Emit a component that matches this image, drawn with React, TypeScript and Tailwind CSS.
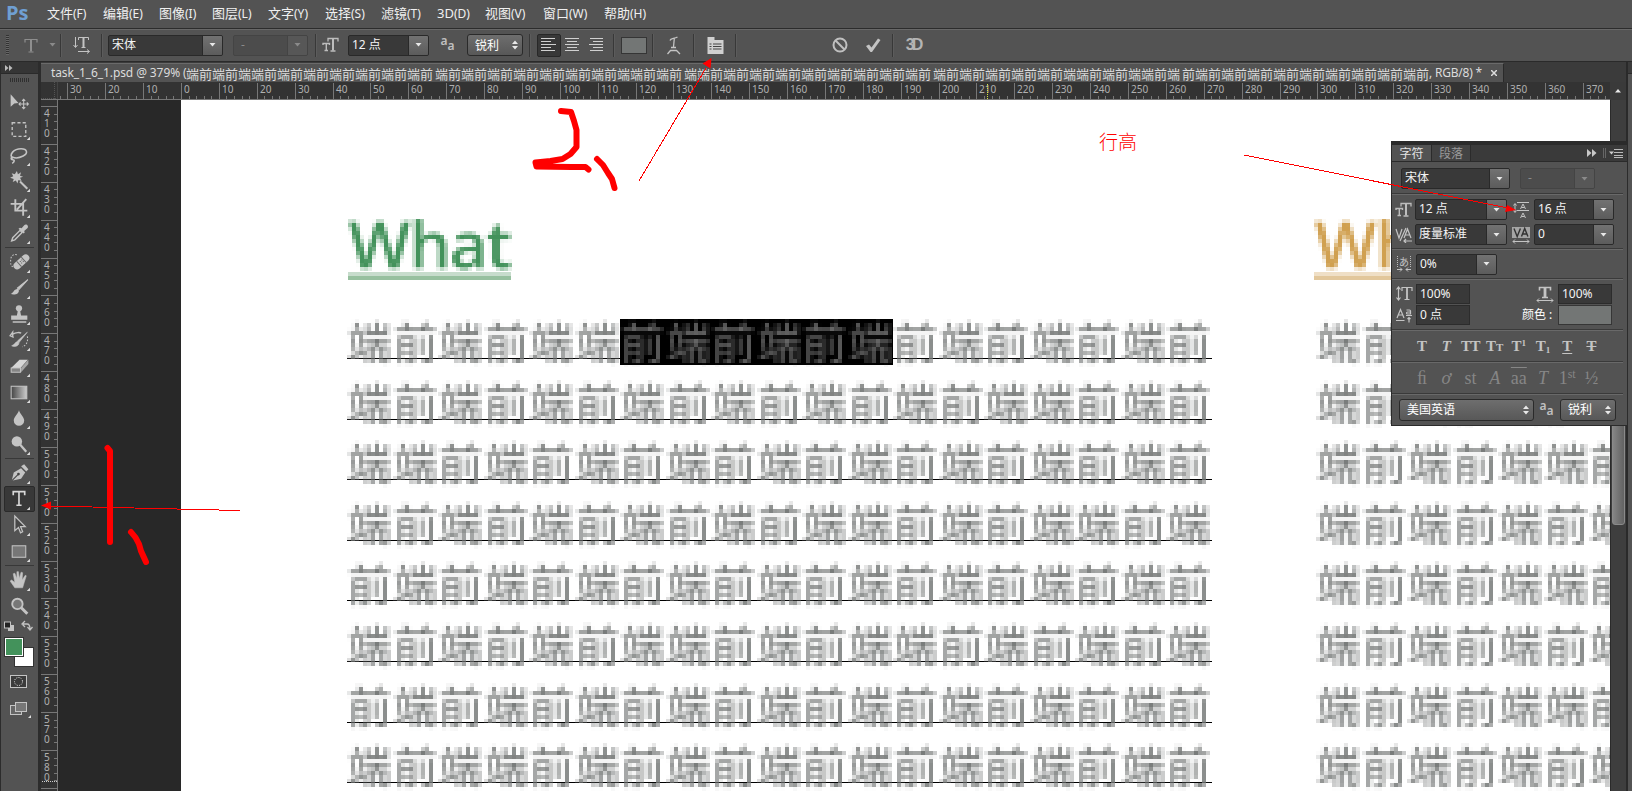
import type { ReactNode } from "react";
import { clsx } from "clsx";

const UI = "font-['Noto_Sans','Noto_Sans_CJK_SC',sans-serif]";
const CJK = "font-['Noto_Sans_CJK_SC',sans-serif]";
const SERIF = "font-['Liberation_Serif',serif]";

const LINES = [
  "端前端前端端前端前端前端前端前端前端前",
  "端前端前端前端前端前端前端前端端前端前",
  "端端前端前端前端前端前端前端前端前端前",
  "端前端前端前端前端前端端前端前端端前端",
  "前端前端前端前端前端前端前端前端前端前",
  "端前端前端前端端前端前端端前端前端前端",
  "前端前端前端前端前端前端前端前端前端前",
  "端前端端前端前端前端前端前端前端前端前",
];
const RIGHT_LINES = [
  "端前端前端前端",
  "端前端前端前端",
  "端前端前端端前",
  "端前端前端前端",
  "端前端前端端前",
  "端前端前端前端",
  "端前端前端端前",
  "端前端前端前端",
];
const ROW_HEIGHTS = [
  "h-[61px]", "h-[60px]", "h-[61px]", "h-[60px]",
  "h-[61px]", "h-[61px]", "h-[60px]", "h-[61px]",
];

const MENUS: [string, string, string][] = [
  ["文件", "(F)", "w-[56px]"],
  ["编辑", "(E)", "w-[56px]"],
  ["图像", "(I)", "w-[53px]"],
  ["图层", "(L)", "w-[56px]"],
  ["文字", "(Y)", "w-[57px]"],
  ["选择", "(S)", "w-[56px]"],
  ["滤镜", "(T)", "w-[56px]"],
  ["3D", "(D)", "w-[48px]"],
  ["视图", "(V)", "w-[58px]"],
  ["窗口", "(W)", "w-[61px]"],
  ["帮助", "(H)", "w-[60px]"],
];

/* Mosaic effect used for the zoomed-in artboard: average, sample one point per cell, grow it to 4x4. */
function MosaicFilter() {
  return (
    <svg className="absolute h-0 w-0" aria-hidden="true">
      <filter id="mosaic" filterUnits="userSpaceOnUse" primitiveUnits="userSpaceOnUse" x="-4" y="-4" width="220" height="88" colorInterpolationFilters="sRGB">
        <feGaussianBlur in="SourceGraphic" stdDeviation="1.2" result="soft" />
        <feFlood x="1" y="1" width="1" height="1" floodColor="#000" result="dot" />
        <feOffset in="dot" dx="0" dy="0" x="0" y="0" width="4" height="4" result="cell" />
        <feTile in="cell" x="-4" y="-4" width="220" height="88" result="grid" />
        <feComposite in="soft" in2="grid" operator="in" result="p" />
        <feOffset in="p" dx="1" dy="0" result="p1" />
        <feMerge result="h2"><feMergeNode in="p" /><feMergeNode in="p1" /></feMerge>
        <feOffset in="h2" dx="-2" dy="0" result="h2b" />
        <feMerge result="h4"><feMergeNode in="h2" /><feMergeNode in="h2b" /></feMerge>
        <feOffset in="h4" dx="0" dy="1" result="v1" />
        <feMerge result="v2"><feMergeNode in="h4" /><feMergeNode in="v1" /></feMerge>
        <feOffset in="v2" dx="0" dy="-2" result="v2b" />
        <feMerge><feMergeNode in="v2" /><feMergeNode in="v2b" /></feMerge>
      </filter>
    </svg>
  );
}

function Glyphs({ text, selectFrom = -1, selectTo = -1 }: { text: string; selectFrom?: number; selectTo?: number }) {
  return (
    <div className={clsx("col-start-1 row-start-1 flex h-[46px] text-[44px] leading-[42px]", CJK)}>
      {[...text].map((ch, i) => {
        const selected = i >= selectFrom && i < selectTo;
        return (
          <span key={i} className={clsx("h-[46px] shrink-0 pt-px pl-px", i % 2 ? "w-[45px]" : "w-[46px]", selected ? "bg-black text-[#6a6a6a]" : "text-[#737675]")}>
            <span className="block h-[45px] w-[44px] [filter:url(#mosaic)]">{ch}</span>
          </span>
        );
      })}
    </div>
  );
}

function Caret({ dim = false }: { dim?: boolean }) {
  return (
    <svg width="7" height="4" viewBox="0 0 7 4"><path d="M0.5 0h6L3.5 3.6z" fill={dim ? "#8a8a8a" : "#e8e8e8"} /></svg>
  );
}

function Combo({ w, value, dim = false }: { w: string; value: string; dim?: boolean }) {
  return (
    <div className={clsx("flex h-[21px] shrink-0 overflow-hidden rounded-[2px] border text-[12px] leading-[18px]", w, UI, dim ? "border-[#444] bg-[#4c4c4c] text-[#8a8a8a]" : "border-[#292929] bg-[#393939] text-[#f4f4f4]")}>
      <span className={clsx("grow whitespace-nowrap", dim ? "pl-[7px]" : "pl-[3px]")}>{value}</span>
      <span className={clsx("flex w-[20px] items-center justify-center border-l", dim ? "border-[#444] bg-[#575757]" : "border-[#292929] bg-linear-to-b from-[#727272] to-[#5c5c5c]")}>
        <Caret dim={dim} />
      </span>
    </div>
  );
}

function Field({ w, value }: { w: string; value: string }) {
  return <div className={clsx("h-[20px] shrink-0 border border-[#2c2c2c] bg-[#393939] pl-[3px] text-[12px] leading-[18px] text-[#f4f4f4]", w, UI)}>{value}</div>;
}

function Popup({ w, value }: { w: string; value: string }) {
  return (
    <div className={clsx("flex h-[22px] shrink-0 items-center justify-between rounded-[3px] border border-[#2a2a2a] bg-linear-to-b from-[#6e6e6e] to-[#585858] pr-[4px] pl-[7px] text-[12px] text-white", w, CJK)}>
      <span className="-mt-px leading-none">{value}</span>
      <svg width="6" height="10" viewBox="0 0 6 10"><path d="M0 4L3 0.5 6 4zM0 6h6L3 9.5z" fill="#e8e8e8" /></svg>
    </div>
  );
}

function Bar() {
  return <i className="h-[23px] w-[2px] shrink-0 border-l border-[#383838] bg-[#5c5c5c]" />;
}

function Slot({ w, children }: { w: string; children?: ReactNode }) {
  return <div className={clsx("flex h-full shrink-0 items-center justify-center", w)}>{children}</div>;
}

function SizeIcon() {
  return (
    <svg width="17" height="16" viewBox="0 0 17 16" fill="none" stroke="#bdbdbd">
      <path d="M6 4.500V1.500h10V4.500M8.500 14h5" strokeWidth="1.300" />
      <path d="M11 1.500v12" strokeWidth="2" />
      <path d="M1 8V6.500h6.500V8M4.300 6.500V13M2.500 13.500h3.500" strokeWidth="1.400" />
    </svg>
  );
}

function AaIcon() {
  return (
    <span className="flex w-[15px] font-['Noto_Sans',sans-serif] text-[12px] font-semibold leading-none text-[#c0c0c0]">
      <span className="-mt-[3px]">a</span><span className="mt-[2px]">a</span>
    </span>
  );
}

function AlignIcon({ d }: { d: string }) {
  return <svg width="16" height="15" viewBox="0 0 16 15"><path d={d} stroke="#d0d0d0" fill="none" /></svg>;
}

function OptionsBar() {
  return (
    <div className="flex h-[33px] shrink-0 items-center border-t border-b border-t-[#686868] border-b-[#2a2a2a] bg-[#535353] pb-px">
      <Slot w="w-[14px]"><i className="h-[20px] w-[3px] bg-[repeating-linear-gradient(#333_0_1px,#666_1px_2px)]" /></Slot>
      <Slot w="w-[34px]">
        <svg width="14" height="15" viewBox="0 0 14 15" fill="none" stroke="#8e8e8e"><path d="M1 4.500V1.500h12V4.500M4.500 14h5" strokeWidth="1.200" /><path d="M7 1.500v12" strokeWidth="2" /></svg>
      </Slot>
      <Slot w="w-[8px]"><Caret dim /></Slot>
      <Slot w="w-[4px]" />
      <Bar />
      <Slot w="w-[39px]">
        <svg width="18" height="18" viewBox="0 0 18 18" fill="none" stroke="#c4c4c4">
          <path d="M2.500 1v10M.5 9l2 2.500 2-2.500M5 15.500h11M14 13.500l2.500 2-2.500 2M5.500 4V1.500h10V4M8.500 11.500h4" /><path d="M10.500 1.500v10" strokeWidth="2" />
        </svg>
      </Slot>
      <Bar />
      <Slot w="w-[5px]" />
      <Combo w="w-[115px]" value="宋体" />
      <Slot w="w-[10px]" />
      <Combo w="w-[75px]" value="-" dim />
      <Slot w="w-[7px]" />
      <Bar />
      <Slot w="w-[26px]"><SizeIcon /></Slot>
      <Slot w="w-[5px]" />
      <Combo w="w-[81px]" value="12 点" />
      <Slot w="w-[38px]"><AaIcon /></Slot>
      <Popup w="w-[56px]" value="锐利" />
      <Slot w="w-[6px]" />
      <Bar />
      <Slot w="w-[6px]" />
      <div className="flex h-[23px] w-[24px] items-center justify-center rounded-[2px] border border-[#282828] bg-[#383838]">
        <AlignIcon d="M0 .5h14M0 3.500h10M0 6.500h15M0 9.500h10M0 12.500h14" />
      </div>
      <Slot w="w-[22px]"><AlignIcon d="M1 .5h14M3 3.500h10M1 6.500h14M3 9.500h10M1 12.500h14" /></Slot>
      <Slot w="w-[25px]"><AlignIcon d="M2 .5h13M5 3.500h10M1 6.500h14M5 9.500h10M2 12.500h13" /></Slot>
      <Slot w="w-[5px]" />
      <Bar />
      <Slot w="w-[37px]"><i className="h-[17px] w-[26px] border border-[#353535] bg-[#737675]" /></Slot>
      <Bar />
      <Slot w="w-[39px]">
        <svg width="16" height="19" viewBox="0 0 16 19" fill="none" stroke="#c4c4c4" strokeWidth="1.300">
          <path d="M4 4.500c.5-2.500 4-1.500 7.500-3.500M8.300 2.500L7.500 11M5 11.500h5M1.500 18l3-3.500h6l3.500 3.500" />
        </svg>
      </Slot>
      <Bar />
      <Slot w="w-[40px]">
        <svg width="17" height="17" viewBox="0 0 17 17">
          <path d="M.5 0h7v3H16.500v14H.5z" fill="#d0d0d0" /><path d="M2.500 7h2M2.500 9.500h2M2.500 12h2M6 7h8.500M6 9.500h8.500M6 12h8.500" stroke="#444" />
        </svg>
      </Slot>
      <Bar />
      <Slot w="w-[87px]" />
      <Slot w="w-[32px]">
        <svg width="16" height="16" viewBox="0 0 16 16" fill="none" stroke="#c0c0c0" strokeWidth="2"><circle cx="8" cy="8" r="6.500" /><path d="M3.500 3.500l9 9" /></svg>
      </Slot>
      <Slot w="w-[33px]">
        <svg width="16" height="15" viewBox="0 0 16 15"><path d="M1 8l3-1.500 2.500 3L13 .5l2.500 1.500L7 14H5.500z" fill="#c4c4c4" /></svg>
      </Slot>
      <Slot w="w-[3px]" />
      <Bar />
      <Slot w="w-[38px]"><span className="font-['Liberation_Sans',sans-serif] text-[16px] font-bold leading-none tracking-[-3px] text-[#b4b4b4]">3D</span></Slot>
    </div>
  );
}

const G = "#c4c4c4";
const TOOL_GROUPS: { id: string; art: ReactNode; plain?: boolean }[][] = [
  [
    { id: "move", plain: true, art: <><path d="M3 3v12l3.500-3 4-.5z" fill={G} /><path d="M15.500 8v9M11 12.500h9M14 9.500l1.500-1.500L17 9.500M14 15.500l1.500 1.500 1.500-1.500M12.500 11L11 12.500l1.500 1.500M18.500 11l1.500 1.500-1.500 1.500" stroke={G} fill="none" /></> },
    { id: "marquee", art: <rect x="4.500" y="5.500" width="13" height="13" fill="none" stroke={G} strokeWidth="1.300" strokeDasharray="3 2" /> },
    { id: "lasso", art: <path d="M5 15C1 11 6 5.500 13 5.500c6 0 7 4.500 2 7-4 2-8 2-10 1-2 0-2 2.500 0 2.500s2 2-.5 3.500" fill="none" stroke={G} strokeWidth="1.500" /> },
    { id: "wand", art: <><path d="M9 2l1 3 3-2-1 3.500 3 1-3 1 1.500 3-3-1L9.500 14 8 11l-3 1.500 1-3-3.500-1 3-1.500L4 4l3 1z" fill={G} /><path d="M12 12l7 7" stroke={G} strokeWidth="2" /></> },
    { id: "crop", art: <path d="M7.500 4v11H19M3 8.500h12V20M9 14L18 4" fill="none" stroke={G} strokeWidth="1.800" /> },
    { id: "dropper", art: <><path d="M4 19l1-3 7-7 2 2-7 7z" fill="none" stroke={G} strokeWidth="1.300" /><path d="M10.500 7.500l1.500-1 1.500.5L16 4c2-2 5 1 3 3l-3 2.500.5 1.500-1 1z" fill={G} /></> },
  ],
  [
    { id: "heal", art: <><g transform="rotate(-42 13 11)"><rect x="4" y="8" width="18" height="7" rx="3.500" fill={G} /><path d="M10 8v7M16 8v7" stroke="#666" /><path d="M12 10.500h3M12 12.500h3" stroke="#666" strokeDasharray="1 1" /></g><path d="M9 4.500c-5-1-6 3-6 6s0 5 3 6" fill="none" stroke={G} strokeDasharray="1.500 1.500" /></> },
    { id: "brush", art: <><path d="M19.500 3.500L11 13l-1.500-1.500z" fill={G} stroke={G} /><path d="M3 17c3-.5 3-5 7-4.500 2 1.500.5 4.500-2 5-2 .5-4 .3-5-.5z" fill={G} /></> },
    { id: "stamp", art: <><circle cx="11" cy="6" r="3" fill={G} /><path d="M10 8h2l1 5h6v4H3.500v-4H9zM5 18.500h13V20H5z" fill={G} /></> },
    { id: "history", art: <><path d="M19 4l-8 10-1.500-1.500zM4 17c3-.5 3-4 6-4 2 1.500.5 4-2 4.500-2 .3-3 .2-4-.5z" fill={G} stroke={G} strokeWidth=".6" /><path d="M5 8V4l-2.500 3.500L6 9M5 6c3-2 7-2 8-1" fill="none" stroke={G} strokeWidth="1.300" /><path d="M19 8c1 5-1 9-5 10" fill="none" stroke={G} strokeDasharray="1.500 1.500" /></> },
    { id: "eraser", art: <><path d="M3.500 13.500l8-8h8l-7 8z" fill="#d6d6d6" /><path d="M3.500 13.500h9v4h-9z" fill="#858585" stroke={G} /><path d="M13 13.500l7-8v4l-7 8z" fill="#a5a5a5" /></> },
    { id: "gradient", art: <><defs><linearGradient id="gr"><stop stopColor="#444" /><stop offset="1" stopColor="#ccc" /></linearGradient></defs><rect x="3.500" y="6" width="15" height="12" fill="url(#gr)" stroke={G} /></> },
    { id: "blur", art: <path d="M11 4c1 4 5 6 5 10a5 5 0 0 1-10 0c0-4 4-6 5-10z" fill={G} /> },
    { id: "dodge", art: <><circle cx="9" cy="9" r="5" fill={G} /><path d="M12 12l6 7" stroke={G} strokeWidth="2.200" /></> },
  ],
  [
    { id: "pen", art: <><path d="M4 19l2-8 7-4 4 4-4 6z" fill={G} /><path d="M13 5l3-2 4 5-2 2z" fill={G} /><path d="M4 19l6-6" stroke="#444" /><circle cx="10.500" cy="12.500" r="1.300" fill="#444" /></> },
    { id: "type", art: <path d="M5.500 8V4.500h11V8M11 4.500v13M8.500 17.500h5" stroke="#d8d8d8" strokeWidth="1.600" fill="none" /> },
    { id: "path", art: <path d="M7 3v14l3.500-3 2 5 2-1-2-5H17z" fill="#484848" stroke={G} strokeWidth="1.200" /> },
    { id: "shape", art: <rect x="4.500" y="6.500" width="13" height="11" fill="#777" stroke={G} /> },
  ],
  [
    { id: "hand", art: <path d="M7 19l-4.500-6.500 1.500-1L7 14 5.500 5.500l1.500-.5L9 10V3.500h1.500l.8 6.500L13 4l1.500.5-.5 7 3-4.500 1 .5-2 6.500L14.500 19z" fill={G} stroke={G} strokeWidth=".5" /> },
    { id: "zoom", plain: true, art: <><circle cx="9.500" cy="9.500" r="5" fill="#777" stroke={G} strokeWidth="1.800" /><path d="M13 13l6 6" stroke={G} strokeWidth="2.800" /></> },
  ],
];

function Tool({ art, active, plain }: { art: ReactNode; active?: boolean; plain?: boolean }) {
  return (
    <div className={clsx("flex h-[26px] w-[31px] shrink-0 items-center justify-center rounded-[2px]", active && "border border-[#2a2a2a] bg-[#383838]")}>
      <svg width="27" height="24" viewBox="-1 0 25 23" className="shrink-0">
        {art}
        {!plain && <path d="M21.500 19v3h-3z" fill="#e0e0e0" />}
      </svg>
    </div>
  );
}

function Toolbar() {
  return (
    <div className="flex w-[41px] shrink-0 flex-col border-r-[3px] border-l border-[#2c2c2c] bg-[#535353]">
      <div className="flex h-[12px] shrink-0 items-center border-b border-[#2a2a2a] bg-[#353535] pl-[4px]">
        <svg width="8" height="6" viewBox="0 0 8 6"><path d="M0 0l3.500 3L0 6zM4 0l3.500 3L4 6z" fill="#bbb" /></svg>
      </div>
      <div className="flex h-[16px] shrink-0 items-start pt-[4px] pl-[9px]">
        <i className="h-[4px] w-[19px] bg-[repeating-linear-gradient(90deg,#2f2f2f_0_1px,#555_1px_2px)]" />
      </div>
      <div className="flex flex-col pl-[3px]">
        {TOOL_GROUPS.map((group, gi) => (
          <div key={gi} className="flex flex-col">
            {gi > 0 && <i className="mt-px mb-px ml-px h-px w-[29px] bg-[#383838]" />}
            {group.map((t) => <Tool key={t.id} art={t.art} plain={t.plain} active={t.id === "type"} />)}
          </div>
        ))}
        <svg width="32" height="106" viewBox="4 619 32 106" className="shrink-0">
          <rect x="8.500" y="625.500" width="5" height="5" fill={G} stroke={G} />
          <rect x="4.500" y="622" width="6" height="6" fill="#222" stroke={G} />
          <path d="M23 624h4c2 0 3 1 3 5M25 621l-3 3 3 3M27.500 627l2.500 3 2.500-3" fill="none" stroke={G} strokeWidth="1.300" />
          <rect x="14.500" y="647.500" width="19" height="19" fill="#fff" stroke="#333" />
          <rect x="4.500" y="637.500" width="19" height="19" fill="#fff" stroke="#333" />
          <rect x="6" y="639" width="16" height="16" fill="#43925b" />
          <rect x="10.500" y="675.500" width="16" height="12" fill="#3b3b3b" stroke={G} />
          <circle cx="18.500" cy="681.500" r="4" fill="none" stroke="#eee" strokeDasharray="1 1.300" />
          <rect x="10.500" y="705.500" width="11" height="9" fill="#666" stroke={G} />
          <rect x="15.500" y="702.500" width="11" height="9" fill="#777" stroke={G} />
          <path d="M31 715v3h-3z" fill="#e0e0e0" />
        </svg>
      </div>
    </div>
  );
}

const STEP = 37.88;

function TopRuler() {
  const majors = Array.from({ length: 41 }, (_, i) => i - 3);
  return (
    <svg width="1569" height="18" viewBox="41 82 1569 18" className="shrink-0 bg-[#333] font-['Noto_Sans',sans-serif] text-[10px]">
      <path d="M41 98.500h17M54.500 82v18" stroke="#555" strokeDasharray="1 1" />
      <path d="M57.500 82v17" stroke="#444" />
      <path d="M60.500 96v3" stroke="#777" />
      {majors.map((n) => {
        const x = Math.round(181 + n * STEP) + 0.5;
        return (
          <g key={n}>
            <path d={`M${x} 83V99` + [1, 2, 3, 4].map((k) => `M${Math.round(181 + (n + k / 5) * STEP) + 0.5} 96V99`).join("")} stroke="#777" />
            {n < 38 && <text x={x + 2.500} y="93" fill="#b0b0b0">{Math.abs(n) * 10}</text>}
          </g>
        );
      })}
      <path d="M41 99.500H1610" stroke="#777" />
      <path d="M987.500 84V99" stroke="#d8e840" strokeDasharray="1 1" />
    </svg>
  );
}

function SideRuler() {
  const majors = Array.from({ length: 19 }, (_, i) => i);
  return (
    <svg width="17" height="691" viewBox="41 100 17 691" className="shrink-0 bg-[#333] font-['Noto_Sans',sans-serif] text-[10px]">
      {majors.map((n) => {
        const y = Math.round(106 + n * STEP) + 0.5;
        return (
          <g key={n}>
            <path d={`M41 ${y}H57` + [1, 2, 3, 4].map((k) => `M54 ${Math.round(106 + (n + k / 5) * STEP) + 0.5}H57`).join("")} stroke="#777" />
            {n < 18 && [...String(410 + n * 10)].map((c, i) => (
              <text key={i} x="44" y={y + 10.500 + i * 10} fill="#b0b0b0">{c}</text>
            ))}
          </g>
        );
      })}
      <path d="M57.500 100V791" stroke="#777" />
      <path d="M42 781.500H57" stroke="#ccc" strokeDasharray="1 1" />
    </svg>
  );
}

function Column({ title, color, bars, rows, underlined, widths }: { title: string; color: string; bars: [string, string]; rows: string[]; underlined?: boolean; widths: [string, string] }) {
  return (
    <div className={clsx("shrink-0 pt-[106px]", widths[0])}>
      <div className={clsx("h-[66px] pt-[2px] pl-[2px] font-['Open_Sans',sans-serif] text-[66px] font-semibold leading-[71px] tracking-[-1.700px]", color)}>
        <span className="block h-[72px] w-[200px] [filter:url(#mosaic)]">{title}</span>
      </div>
      <div className={clsx("ml-px h-[4px]", widths[1], bars[0])} />
      <div className={clsx("ml-px h-[4px]", widths[1], bars[1])} />
      <div className="mt-[39px]">
        {rows.map((r, i) => (
          <div key={i} className={clsx("grid content-start", ROW_HEIGHTS[i], !underlined && "pl-[3px]")}>
            {underlined && <i className="col-start-1 row-start-1 mt-[39px] h-px w-[865px] bg-black" />}
            <Glyphs text={r} selectFrom={underlined && i === 0 ? 6 : -1} selectTo={underlined && i === 0 ? 12 : -1} />
          </div>
        ))}
      </div>
    </div>
  );
}

function Artboard() {
  return (
    <div className="flex w-[1552px] shrink-0 overflow-hidden bg-[#282828] pl-[123px]">
      <div className="flex w-[1429px] overflow-hidden bg-white pl-[166px]">
        <Column title="What" color="text-[#43925b]" bars={["bg-[#c7dccc]", "bg-[#97c09f]"]} rows={LINES} underlined widths={["w-[966px]", "w-[163px]"]} />
        <Column title="Why" color="text-[#d0a050]" bars={["bg-[#efdfc6]", "bg-[#e2c79b]"]} rows={RIGHT_LINES} widths={["w-[330px]", "w-[163px]"]} />
      </div>
    </div>
  );
}

function Rule() {
  return <div className="mr-[4px] h-[2px] shrink-0 border-t border-[#3a3a3a] bg-[#696969]" />;
}

function Style({ children, className }: { children: ReactNode; className?: string }) {
  return <span className={clsx("flex w-[24.200px] items-baseline justify-center whitespace-nowrap leading-none", className)}>{children}</span>;
}

function CharacterPanel() {
  return (
    <div className={clsx("absolute top-[141px] left-[1391px] flex h-[285px] w-[237px] flex-col border border-t-[4px] border-[#2b2b2b] bg-[#535353]", UI)}>
      <div className="flex h-[17px] shrink-0 border-b border-[#2b2b2b] bg-[#3a3a3a] text-[12px] leading-[17px]">
        <span className="w-[39px] bg-[#535353] text-center text-[#e4e4e4]">字符</span>
        <span className="w-[40px] border-x border-[#2b2b2b] bg-[#434343] text-center text-[#999]">段落</span>
        <svg width="40" height="16" viewBox="0 0 40 16" className="ml-auto">
          <path d="M0 4l4.500 4L0 12zM5 4l4.500 4L5 12z" fill="#c8c8c8" /><path d="M16.500 3v10M18.500 3v10" stroke="#666" /><path d="M22 6.500h5l-2.500 3z" fill="#ccc" /><path d="M27 4.500h9M27 7.500h9M27 10.500h9M27 12.500h9" stroke="#bbb" />
        </svg>
      </div>
      <div className="flex h-[31px] shrink-0 pt-[6px] pl-[9px]">
        <Combo w="w-[109px]" value="宋体" /><div className="w-[10px]" /><Combo w="w-[75px]" value="-" dim />
      </div>
      <Rule />
      <div className="flex h-[27px] shrink-0 items-center pt-[2px]">
        <Slot w="w-[23px]"><SizeIcon /></Slot>
        <Combo w="w-[92px]" value="12 点" />
        <Slot w="w-[27px]">
          <svg width="16" height="18" viewBox="0 0 16 18" fill="none" stroke={G}><path d="M4 1.500h12M4 9.500h12M2 3v8M.5 4.500L2 2.500l1.500 2M.5 9.500l1.500 2 1.500-2M7.500 8L10 3l2.500 5M8.500 6.500h3M7.500 17l2.500-5 2.500 5M8.500 15.500h3" /></svg>
        </Slot>
        <Combo w="w-[80px]" value="16 点" />
      </div>
      <div className="flex h-[25px] shrink-0 items-center">
        <Slot w="w-[23px]">
          <svg width="18" height="16" viewBox="0 0 18 16" fill="none" stroke={G} strokeWidth="1.200"><path d="M1 2l3 9 3-9M11 1L5 14M9 11l3.500-9 3.500 9M10 8h5M9 14h8M11 12l-2 2 2 2" /></svg>
        </Slot>
        <Combo w="w-[92px]" value="度量标准" />
        <Slot w="w-[27px]">
          <svg width="18" height="18" viewBox="0 0 18 18" fill="none"><path d="M0 1h18v11H0z" fill="#a5a5a5" /><path d="M2 2.500l3.200 8 3.200-8M9.500 10.500l3.200-8 3.200 8M10.500 8h4.500" stroke="#333" strokeWidth="1.400" /><path d="M1 15.500h16M3 13.500l-2 2 2 2M15 13.500l2 2-2 2" stroke={G} /></svg>
        </Slot>
        <Combo w="w-[80px]" value="0" />
      </div>
      <div className="h-px shrink-0" />
      <Rule />
      <div className="flex h-[28px] shrink-0 items-center">
        <Slot w="w-[24px]">
          <span className={clsx("flex flex-col items-center text-[10px] leading-[11px] text-[#c4c4c4]", CJK)}>
            <span className="border-x border-dotted border-[#bbb] px-px">あ</span>
            <svg width="14" height="5" viewBox="0 0 14 5"><path d="M0 2.500h5M3 .5l2 2-2 2M14 2.500H9M11 .5l-2 2 2 2" stroke={G} fill="none" /></svg>
          </span>
        </Slot>
        <Combo w="w-[81px]" value="0%" />
      </div>
      <Rule />
      <div className="flex h-[25px] shrink-0 items-center pt-[3px]">
        <Slot w="w-[24px]">
          <svg width="17" height="16" viewBox="0 0 17 16" fill="none" stroke={G}><path d="M2.500 1v13M.5 3.500l2-2.500 2 2.500M.5 11.500l2 2.500 2-2.500M6 5V1.500h10V5M8.500 13.500h5" strokeWidth="1.200" /><path d="M11 1.500v12" strokeWidth="1.800" /></svg>
        </Slot>
        <Field w="w-[54px]" value="100%" />
        <Slot w="w-[88px]">
          <svg width="18" height="17" viewBox="0 0 18 17" fill="none" stroke={G} className="ml-[62px]"><path d="M3.500 4.500V1.500h11v3M6 11.500h6" strokeWidth="1.600" /><path d="M9 1.500v10" strokeWidth="2.800" /><path d="M1 14.500h16M3 12.500l-2 2 2 2M15 12.500l2 2-2 2" /></svg>
        </Slot>
        <Field w="w-[54px]" value="100%" />
      </div>
      <div className="flex h-[20px] shrink-0 items-center">
        <Slot w="w-[24px]"><svg width="16" height="15" viewBox="0 0 16 15" fill="none" stroke={G} strokeWidth="1.200"><path d="M1 10L4.500 1.500 8 10M2.300 7h4.400M0 12.500h8.500M10 7.500h6M10.500 2h3q1 0 1 1v3h-3q-1 0-1-1t1-1h3M13 14.500V9.500M11.500 11L13 9.500l1.500 1.500" /></svg></Slot>
        <Field w="w-[54px]" value="0 点" />
        <span className="w-[88px] whitespace-nowrap pl-[52px] text-[12px] leading-none text-white">颜色 :</span>
        <i className="h-[20px] w-[54px] border border-[#363636] bg-[#737675]" />
      </div>
      <div className="h-[4px] shrink-0" />
      <Rule />
      <div className={clsx("flex h-[30px] shrink-0 items-center pl-[18px] text-[15px] font-bold text-[#c4c4c4]", SERIF)}>
        <Style>T</Style>
        <Style className="italic">T</Style>
        <Style className="tracking-[-0.500px]">TT</Style>
        <Style>T<span className="text-[11px]">T</span></Style>
        <Style>T<sup className="text-[9px] leading-none">1</sup></Style>
        <Style>T<sub className="text-[9px] leading-none">1</sub></Style>
        <Style className="underline underline-offset-2">T</Style>
        <Style className="line-through">T</Style>
      </div>
      <Rule />
      <div className={clsx("flex h-[30px] shrink-0 items-center pl-[18px] text-[18px] text-[#868686]", SERIF)}>
        <Style>ﬁ</Style>
        <Style className="italic">ơ</Style>
        <Style>st</Style>
        <Style className="italic">A</Style>
        <Style className="overline">aa</Style>
        <Style className="italic">T</Style>
        <Style>1<sup className="text-[12px] leading-none">st</sup></Style>
        <Style>½</Style>
      </div>
      <Rule />
      <div className="flex h-[29px] shrink-0 items-center pl-[7px]">
        <Popup w="w-[135px]" value="美国英语" />
        <Slot w="w-[26px]"><AaIcon /></Slot>
        <Popup w="w-[56px]" value="锐利" />
      </div>
    </div>
  );
}

function Markup() {
  return (
    <svg width="1632" height="791" viewBox="0 0 1632 791" className="pointer-events-none absolute top-0 left-0">
      <g fill="none" stroke="#f00" strokeWidth="6" strokeLinecap="round" strokeLinejoin="round">
        <path d="M107.500 448l2.500 3v91" />
        <path d="M131 532c3 3 6 7 8 12l2 7 5 11" />
        <path d="M561 111l10 1 3 9 2.500 9v17l-6 7-8 5-12 2-15 1.500 1 4 35 .5h14l3 2.500" />
        <path d="M597 159l6 6 5 8 4 6 2.500 9" />
      </g>
      <g stroke="#f00" shapeRendering="crispEdges">
        <path d="M240 510.500L50 506M639 181L706 68M1244 155L1508 208" />
      </g>
      <path d="M41 505.500l10-4v8zM711.500 58l-9 5.500 8 5zM1516 210l-9-5-2 7z" fill="#f00" />
    </svg>
  );
}

export default function App() {
  return (
    <div className={clsx("relative flex h-[791px] w-[1632px] flex-col overflow-hidden bg-[#535353]", UI)}>
      <MosaicFilter />
      <div className="flex h-[29px] shrink-0 items-center border-b border-[#2c2c2c] pb-[2px]">
        <span className="w-[47px] pl-[6px] font-['Open_Sans',sans-serif] text-[20px] font-bold leading-none text-[#6f9fd2]">Ps</span>
        {MENUS.map(([name, key, w]) => (
          <span key={key} className={clsx("shrink-0 whitespace-nowrap text-[13px] leading-[26px] text-[#f0f0f0]", w)}>
            {name}<span className="text-[12px]">{key}</span>
          </span>
        ))}
      </div>
      <OptionsBar />
      <div className="flex min-h-0 grow">
        <Toolbar />
        <div className="flex w-[1585px] shrink-0 flex-col">
          <div className="flex h-[20px] shrink-0 bg-[#3b3b3b] pt-px">
            <div className="flex w-[1463px] shrink-0 items-center border-t border-r border-t-[#6a6a6a] border-r-[#2a2a2a] bg-[#535353] pl-[10px] text-[12px] leading-none whitespace-nowrap text-[#dcdcdc]">
              <span className="w-[135px] shrink-0 text-[12px] tracking-[-0.100px]">task_1_6_1.psd @ 379% (</span>
              {LINES.slice(0, 5).map((l, i) => (
                <span key={i} className={clsx("w-[249px] shrink-0 text-[13px]", CJK)}>{l}</span>
              ))}
              <span className="-ml-[2px] w-[62px] shrink-0 tracking-[-0.200px]">, RGB/8) *</span>
              <svg width="6" height="6" viewBox="0 0 6 6"><path d="M0 0l6 6M6 0L0 6" stroke="#ddd" strokeWidth="1.500" /></svg>
            </div>
          </div>
          <div className="flex h-[18px] shrink-0">
            <TopRuler />
            <div className="flex grow items-center justify-center bg-[#3a3a3a]">
              <svg width="6" height="4" viewBox="0 0 6 4"><path d="M0 3.500L3 0l3 3.500z" fill="#e8e8e8" /></svg>
            </div>
          </div>
          <div className="flex min-h-0 grow">
            <SideRuler />
            <Artboard />
            <div className="grow border-l border-[#2a2a2a] bg-[#3e3e3e] pt-[100px] pl-px">
              <div className="h-[325px] w-[13px] rounded-[3px] border border-[#8a8a8a] bg-linear-to-r from-[#858585] to-[#626262]" />
            </div>
          </div>
        </div>
        <div className="grow border-l-2 border-[#2a2a2a] bg-[#535353]">
          <div className="h-[12px] border-b border-[#2a2a2a] bg-[#3b3b3b]" />
        </div>
      </div>
      <CharacterPanel />
      <span className={clsx("absolute top-[129px] left-[1099px] text-[19px] leading-[24px] font-light text-[#f00]", CJK)}>行高</span>
      <Markup />
    </div>
  );
}
